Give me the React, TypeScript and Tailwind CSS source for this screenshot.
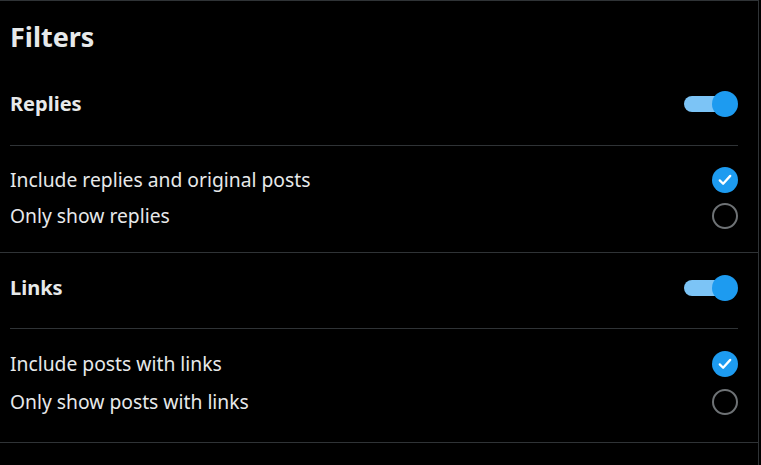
import React, { useState } from "react";

type Option = { label: string; checked: boolean };

type Section = {
  title: string;
  options: Option[];
};

const sections: Section[] = [
  {
    title: "Replies",
    options: [
      { label: "Include replies and original posts", checked: true },
      { label: "Only show replies", checked: false },
    ],
  },
  {
    title: "Links",
    options: [
      { label: "Include posts with links", checked: true },
      { label: "Only show posts with links", checked: false },
    ],
  },
];

function Toggle({ on }: { on: boolean }) {
  return (
    <div className="relative w-[54px] h-[26px] flex items-center">
      <div
        className={
          on
            ? "w-[50px] h-[16px] rounded-full bg-[#7cc4f6]"
            : "w-[50px] h-[16px] rounded-full bg-[#3e4144]"
        }
      />
      <div
        className={
          on
            ? "absolute right-0 top-0 w-[26px] h-[26px] rounded-full bg-[#1d9bf0]"
            : "absolute left-0 top-0 w-[26px] h-[26px] rounded-full bg-[#e7e9ea]"
        }
      />
    </div>
  );
}

function RadioCheck({ checked }: { checked: boolean }) {
  if (checked) {
    return (
      <div className="w-[26px] h-[26px] rounded-full bg-[#1d9bf0] flex items-center justify-center">
        <svg width="18" height="18" viewBox="0 0 24 24" fill="none">
          <path
            d="M5 12.5l4.5 4.5L19 6.5"
            stroke="white"
            strokeWidth="3"
            strokeLinecap="round"
            strokeLinejoin="round"
          />
        </svg>
      </div>
    );
  }
  return <div className="w-[26px] h-[26px] rounded-full border-2 border-[#6e7275]" />;
}

function FilterSection({
  section,
  headerClass,
  listClass,
  rowClass,
}: {
  section: Section;
  headerClass: string;
  listClass: string;
  rowClass: string;
}) {
  const [on, setOn] = useState(true);
  return (
    <div className="border-b border-[#2f3336]">
      <div className="px-[10px]">
        <div className={headerClass}>
          <span className="text-[20px] font-bold text-[#e7e9ea]">{section.title}</span>
          <button type="button" onClick={() => setOn(!on)}>
            <Toggle on={on} />
          </button>
        </div>
        <div className="h-px bg-[#2f3336] mr-[10px]" />
      </div>
      <div className={listClass}>
        {section.options.map((opt) => (
          <div key={opt.label} className={rowClass}>
            <span className="text-[19.3px] text-[#e7e9ea]">{opt.label}</span>
            <RadioCheck checked={opt.checked} />
          </div>
        ))}
      </div>
    </div>
  );
}

export default function App() {
  return (
    <div
      className="w-[761px] h-[465px] bg-black overflow-hidden"
      style={{ fontFamily: '"Noto Sans", "Open Sans", Arial, sans-serif' }}
    >
      <div className="w-[759px] h-full border-t border-r border-[#2f3336]">
        <div className="h-[74px] flex items-center px-[10px] pb-[4px]">
          <h1 className="text-[27px] font-bold text-[#e7e9ea] leading-none">Filters</h1>
        </div>
        <FilterSection
          section={sections[0]}
          headerClass="h-[58px] mb-[12px] flex items-center justify-between pr-[10px]"
          listClass="px-[10px] pt-[16px] pb-[18px]"
          rowClass="h-[36px] flex items-center justify-between pr-[10px]"
        />
        <FilterSection
          section={sections[1]}
          headerClass="h-[58px] mt-[6px] mb-[11px] flex items-center justify-between pr-[10px]"
          listClass="px-[10px] pt-[16px] pb-[21px]"
          rowClass="h-[38px] flex items-center justify-between pr-[10px]"
        />
      </div>
    </div>
  );
}
